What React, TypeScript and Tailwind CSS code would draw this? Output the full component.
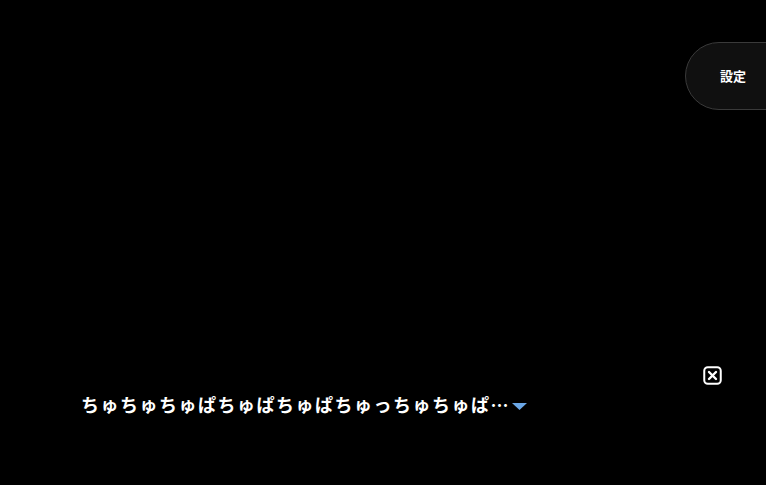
import React from 'react';

const jp = { fontFamily: '"Noto Sans CJK JP", "Noto Sans", sans-serif' };

function CloseIcon() {
  return (
    <svg width="19" height="19" viewBox="0 0 19 19" fill="none">
      <rect x="1.25" y="1.25" width="16.5" height="16.5" rx="3.5" stroke="white" strokeWidth="2" />
      <path d="M6 6L13 13M13 6L6 13" stroke="white" strokeWidth="2.4" strokeLinecap="round" />
    </svg>
  );
}

export default function App() {
  return (
    <div className="flex h-[485px] w-[766px] flex-col overflow-hidden bg-black text-white" style={jp}>
      {/* settings pill, runs off the right edge */}
      <div className="flex justify-end pt-[42px]">
        <button
          type="button"
          className="-mr-[40px] flex h-[68px] w-[121px] items-center rounded-l-[34px] rounded-r-[34px] border border-[#3a3a3a] bg-[#101010] pl-[34px] text-[13px] font-bold"
        >
          設定
        </button>
      </div>

      <div className="flex-1" />

      <div className="flex justify-end pr-[44px]">
        <CloseIcon />
      </div>

      <div className="mt-[7px] flex items-center pb-[69px] pl-[81px]">
        <span className="text-[18px] leading-[24px] font-bold tracking-[1.5px]">
          ちゅちゅちゅぱちゅぱちゅぱちゅっちゅちゅぱ…
        </span>
        <svg width="15" height="7" viewBox="0 0 15 7" className="ml-[2px] mt-[4px]">
          <path d="M0 0H15L7.5 7Z" fill="#6aa6e6" />
        </svg>
      </div>
    </div>
  );
}
